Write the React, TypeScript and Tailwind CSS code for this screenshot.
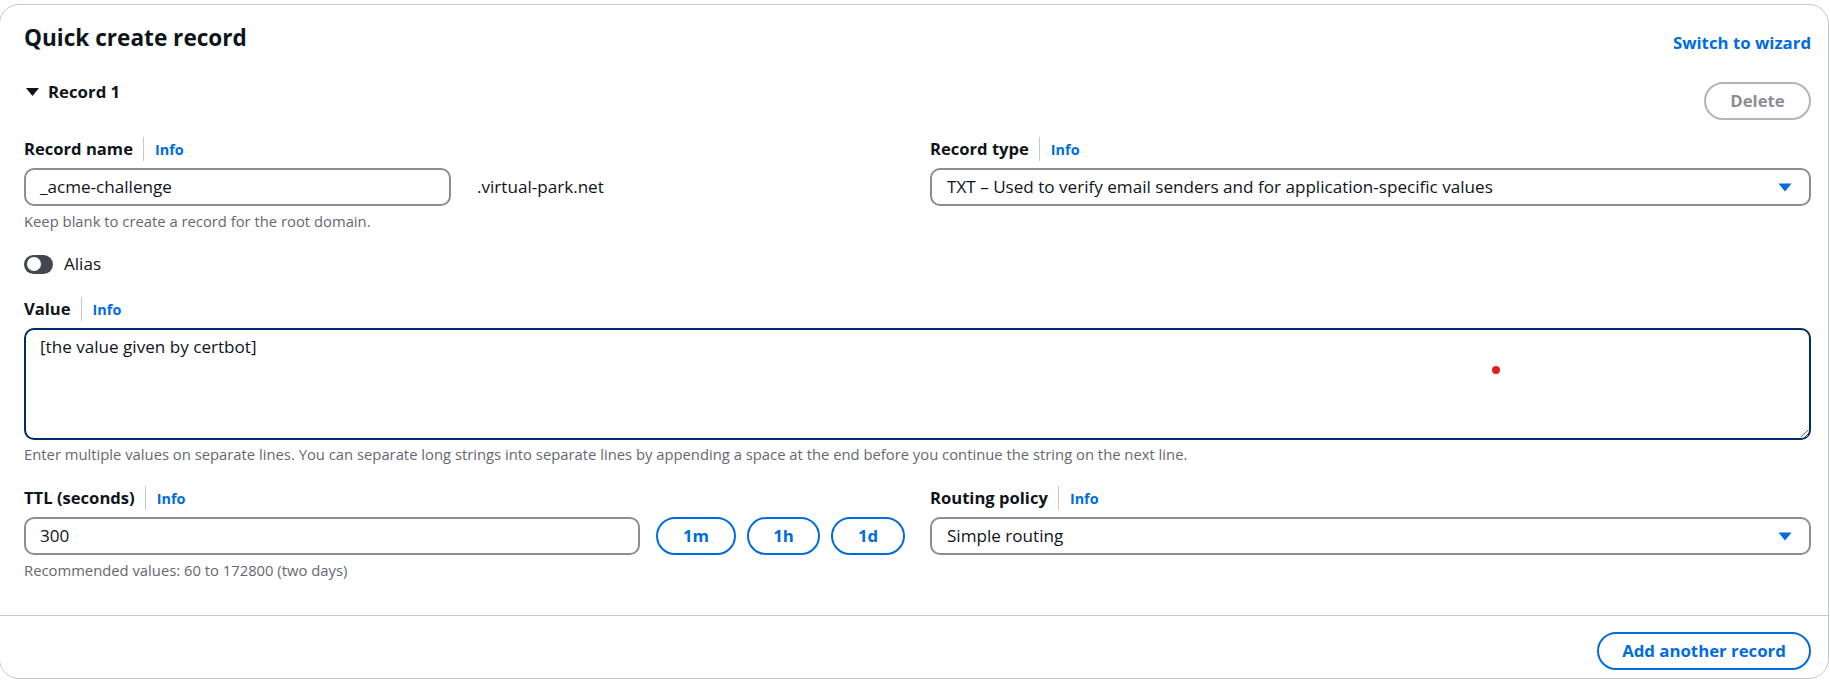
// Route 53 "Quick create record" form, rendered at 120% of Cloudscape sizes.

const FONT = "font-['Open_Sans',sans-serif]";

function FieldLabel({ text }: { text: string }) {
  return (
    <div className="flex h-[24px] items-stretch">
      <span className="text-[16.6px] leading-[24px] font-bold text-[#0f141a]">{text}</span>
      <span className="ml-[10px] pl-[11px] border-l border-[#c6c6cd] text-[14.4px] leading-[25px] font-bold text-[#006ce0]">
        Info
      </span>
    </div>
  );
}

function Hint({ children }: { children: React.ReactNode }) {
  return <div className="mt-[6px] text-[14.8px] leading-[19px] text-[#656871]">{children}</div>;
}

function Caret() {
  return (
    <svg width="14" height="9" viewBox="0 0 14 9" className="shrink-0">
      <path d="M0.5 0.5 H13.5 L7 8.5 Z" fill="#006ce0" />
    </svg>
  );
}

function SelectBox({ value }: { value: string }) {
  return (
    <div className="mt-[7px] flex h-[38px] items-center justify-between rounded-[10px] border-2 border-[#8c8c94] bg-white pl-[15px] pr-[17px]">
      <span className="text-[17.1px] text-[#0f141a]">{value}</span>
      <Caret />
    </div>
  );
}

function TextBox({ value, className = "" }: { value: string; className?: string }) {
  return (
    <div className={`mt-[7px] flex h-[38px] items-center rounded-[10px] border-2 border-[#8c8c94] bg-white pl-[14px] ${className}`}>
      <span className="text-[17.1px] text-[#0f141a]">{value}</span>
    </div>
  );
}

function PillButton({ label, width, disabled = false }: { label: string; width: string; disabled?: boolean }) {
  return (
    <button
      className={`${width} h-[38px] shrink-0 rounded-full border-2 text-[16.8px] font-bold ${
        disabled ? "border-[#b4b4bb] text-[#8c8c94]" : "border-[#006ce0] text-[#006ce0]"
      }`}
    >
      {label}
    </button>
  );
}

export default function App() {
  return (
    <div className={`${FONT} bg-white pt-[4px] h-[680px] overflow-hidden`}>
      <div className="-ml-[1px] w-[1830px] rounded-[20px] border border-[#c6c6cd] bg-white">
        <div className="pl-[24px] pr-[17px] pt-[18px]">
          {/* Header */}
          <div className="flex items-start justify-between">
            <h2 className="text-[22.6px] leading-[29px] font-bold text-[#0f141a]">Quick create record</h2>
            <a className="mt-[8px] text-[16.8px] leading-[24px] font-bold text-[#006ce0]">Switch to wizard</a>
          </div>

          {/* Record 1 */}
          <div className="mt-[25px] flex items-start justify-between">
            <div className="flex h-[24px] items-center">
              <svg width="13" height="8" viewBox="0 0 13 8" className="ml-[2px]">
                <path d="M0 0 H13 L6.5 8 Z" fill="#0f141a" />
              </svg>
              <span className="ml-[9px] text-[16.8px] leading-[24px] font-bold text-[#0f141a]">Record 1</span>
            </div>
            <div className="mt-[2px]">
              <PillButton label="Delete" width="w-[107px]" disabled />
            </div>
          </div>

          {/* Name / type */}
          <div className="mt-[17px] grid grid-cols-2 gap-x-[25px]">
            <div>
              <FieldLabel text="Record name" />
              <div className="flex items-center">
                <TextBox value="_acme-challenge" className="w-[427px]" />
                <span className="ml-[26px] mt-[7px] text-[17.1px] text-[#0f141a]">.virtual-park.net</span>
              </div>
              <Hint>Keep blank to create a record for the root domain.</Hint>
            </div>
            <div>
              <FieldLabel text="Record type" />
              <SelectBox value="TXT – Used to verify email senders and for application-specific values" />
            </div>
          </div>

          {/* Alias toggle */}
          <div className="mt-[21px] flex h-[24px] items-center">
            <div className="flex h-[19px] w-[29px] items-center rounded-full bg-[#424650] px-[2.5px]">
              <div className="h-[14px] w-[14px] rounded-full bg-white" />
            </div>
            <span className="ml-[11px] text-[17.1px] text-[#0f141a]">Alias</span>
          </div>

          {/* Value */}
          <div className="mt-[21px]">
            <FieldLabel text="Value" />
            <div className="relative mt-[7px]">
              <textarea
                readOnly
                defaultValue="[the value given by certbot]"
                className="block h-[112px] w-full rounded-[10px] border-2 border-[#002b66] bg-white px-[14px] pt-[5px] text-[17.1px] leading-[24px] text-[#0f141a] outline-none"
              />
              <div className="absolute left-[1468px] top-[38px] h-[8px] w-[8px] rounded-full bg-[#e11d1d]" />
            </div>
            <div className="mt-[5px] text-[14.8px] leading-[19px] text-[#656871]">
              Enter multiple values on separate lines. You can separate long strings into separate lines by appending a
              space at the end before you continue the string on the next line.
            </div>
          </div>

          {/* TTL / routing */}
          <div className="mt-[22px] grid grid-cols-2 gap-x-[25px]">
            <div>
              <FieldLabel text="TTL (seconds)" />
              <div className="flex items-end">
                <TextBox value="300" className="flex-1" />
                <div className="ml-[16px] flex gap-[11px]">
                  <PillButton label="1m" width="w-[80px]" />
                  <PillButton label="1h" width="w-[73px]" />
                  <PillButton label="1d" width="w-[74px]" />
                </div>
              </div>
              <Hint>Recommended values: 60 to 172800 (two days)</Hint>
            </div>
            <div>
              <FieldLabel text="Routing policy" />
              <SelectBox value="Simple routing" />
            </div>
          </div>
        </div>

        {/* Footer */}
        <div className="mt-[35px] flex justify-end border-t border-[#c6c6cd] pr-[17px] pt-[16px] pb-[8px]">
          <PillButton label="Add another record" width="w-[214px]" />
        </div>
      </div>
    </div>
  );
}
